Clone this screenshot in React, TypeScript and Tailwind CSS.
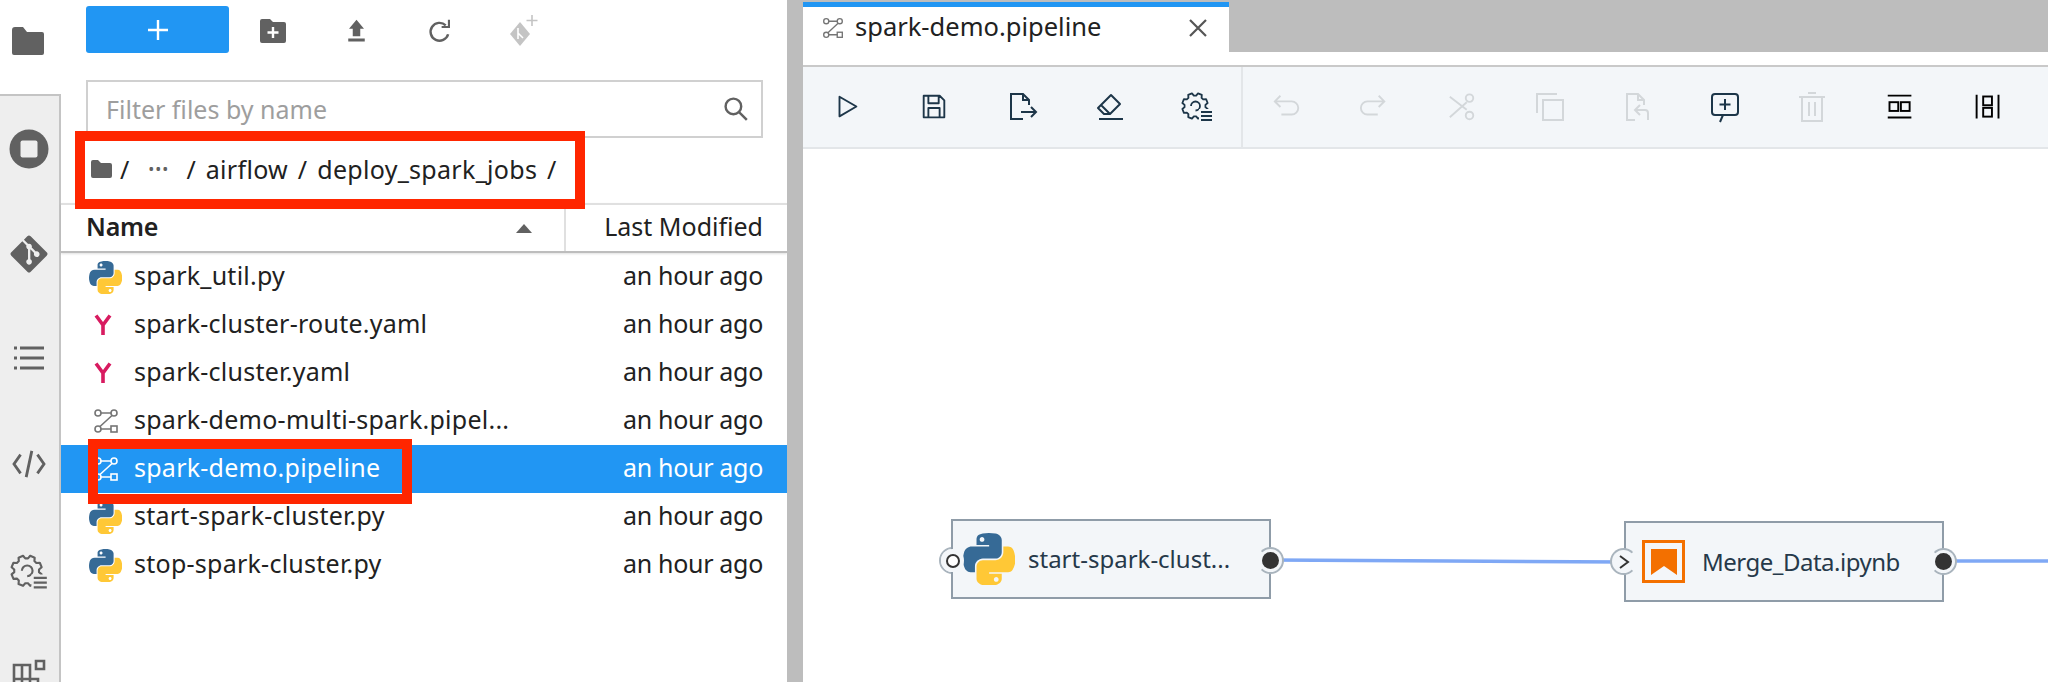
import React from "react";
import { FaGitAlt } from "react-icons/fa";

const FONT = "font-['Noto_Sans','Open_Sans',sans-serif]";

function I({ s = 32, c, children, vb = "0 0 32 32", w = 2 }: { s?: number; c?: string; children: React.ReactNode; vb?: string; w?: number }) {
  return (
    <svg width={s} height={s} viewBox={vb} fill="none" stroke="currentColor" strokeWidth={w} className={c}>
      {children}
    </svg>
  );
}

function PythonLogo({ s }: { s: number }) {
  return (
    <svg width={s} height={s} viewBox="0 0 110.4 110">
      <path fill="#366A96" d="M54.919 0.001c-4.584.022-8.961.413-12.813 1.095C30.76 3.099 28.7 7.295 28.7 15.032V25.25h26.813v3.406H18.638c-7.793 0-14.616 4.684-16.75 13.594-2.462 10.213-2.571 16.586 0 27.25 1.905 7.938 6.457 13.594 14.25 13.594h9.22v-12.25c0-8.85 7.657-16.656 16.75-16.656h26.78c7.454 0 13.406-6.138 13.406-13.625v-25.531c0-7.266-6.13-12.725-13.406-13.937C64.282.328 59.502-.02 54.918.001zm-14.5 8.219c2.77 0 5.031 2.299 5.031 5.125 0 2.816-2.262 5.094-5.031 5.094-2.78 0-5.031-2.278-5.031-5.094 0-2.826 2.252-5.125 5.031-5.125z" />
      <path fill="#FFC836" d="M85.638 28.657v11.906c0 9.231-7.826 17-16.75 17h-26.781c-7.336 0-13.406 6.278-13.406 13.625v25.531c0 7.266 6.319 11.54 13.406 13.625 8.488 2.496 16.627 2.947 26.781 0 6.75-1.954 13.406-5.888 13.406-13.625V86.5H55.513v-3.405H95.7c7.793 0 10.696-5.436 13.406-13.594 2.8-8.399 2.68-16.476 0-27.25-1.926-7.757-5.604-13.594-13.406-13.594zm-15.063 64.657c2.78 0 5.031 2.278 5.031 5.094 0 2.826-2.252 5.125-5.031 5.125-2.77 0-5.031-2.299-5.031-5.125 0-2.816 2.262-5.094 5.031-5.094z" />
    </svg>
  );
}

function PipelineIcon({ s = 26, c = "text-[#757575]" }: { s?: number; c?: string }) {
  return (
    <I s={s} c={c} vb="0 0 26 26" w={1.6}>
      <circle cx="5" cy="5" r="3" />
      <circle cx="21" cy="5" r="3" />
      <circle cx="5" cy="21" r="3" />
      <rect x="18" y="18" width="6" height="6" />
      <path d="M8 5h10M19 7.500 7 18.500M8 21h10" />
    </I>
  );
}

function YamlIcon() {
  return (
    <svg width="18" height="22" viewBox="0 0 18 22" fill="none" stroke="#D81B60" strokeWidth="3.6">
      <path d="M2 1.500 9 11l7-9.500M9 11v10" />
    </svg>
  );
}

const gearPoints = (() => {
  const pts: string[] = [];
  const n = 8;
  for (let i = 0; i < n; i++) {
    const a = (i / n) * Math.PI * 2 + Math.PI / 8;
    const st = (Math.PI * 2) / n;
    [[-0.36, 10.5], [-0.2, 13], [0.2, 13], [0.36, 10.5]].forEach(([o, r]) => {
      const t = a + (o as number) * st;
      pts.push(`${(14 + (r as number) * Math.cos(t)).toFixed(2)},${(15 + (r as number) * Math.sin(t)).toFixed(2)}`);
    });
  }
  return pts.join(" ");
})();

function GearList({ s = 36, id }: { s?: number; id: string }) {
  return (
    <I s={s} vb="0 0 32 32" w={1.8}>
      <defs>
        <clipPath id={id}>
          <path d="M0 0H32V18H18V32H0Z" />
        </clipPath>
      </defs>
      <g clipPath={`url(#${id})`}>
        <polygon points={gearPoints} strokeLinejoin="round" />
        <path d="M10 15a4.500 4.500 0 1 1 4.500 4.500" />
      </g>
      <path d="M20 21h11M20 25h11M20 29h11" />
    </I>
  );
}

const toolbar1 = [
  <I key="a" s={30}><path d="M8 5 26 15.500 8 26Z" strokeLinejoin="round" /></I>,
  <I key="b" s={30}><path d="M5 4h17l5 5v18H5Z M10 4v8h11V4M10 27V17h12v10" strokeLinejoin="round" /></I>,
  <I key="c" s={32}><path d="M17 28H5V3h12l6 6v5M17 3v6h6M15 21h15M25 16l5 5-5 5" /></I>,
  <I key="d" s={32}><path d="M5 28h24M10 23 4 17 17 4l9 9-10 10Zm-3-9 9 9" strokeLinejoin="round" /></I>,
  <GearList key="e" s={32} id="g-tool" />,
];
const off = "text-[#d3d7da]";
const toolbar2 = [
  <I key="a" s={30} c={off}><path d="M9 4 3 10l6 6M3 10h18a7 7 0 0 1 0 14H10" /></I>,
  <I key="b" s={30} c={off}><path d="m21 4 6 6-6 6M27 10H9a7 7 0 0 0 0 14h11" /></I>,
  <I key="c" s={30} c={off}><circle cx="24" cy="6.500" r="4" /><circle cx="24" cy="25" r="4" /><path d="M3 5l18 14M3 27l18-16" /></I>,
  <I key="d" s={32} c={off}><path d="M3 22V3h20M9 9h20v20H9Z" /></I>,
  <I key="e" s={32} c={off}><path d="M14 29H6V3h11l6 6v5M17 3v6h6M27 29v-7a3 3 0 0 0-3-3H14M19 14l-5 5 5 5" /></I>,
];
const toolbar3 = [
  <I key="a" s={32} c="text-[#1d3649]"><rect x="3" y="3" width="26" height="21" rx="3" /><path d="M16 8v11M10.500 13.500h11M14 24l-3 7" /></I>,
  <I key="b" s={32} c={off}><path d="M3 6h26M12 2h8M6 6v24h20V6M13 11v14M19 11v14" /></I>,
  <I key="c" s={28} c="text-black" w={2.2}><path d="M2 3h27M2 28h27" /><rect x="4" y="10.500" width="10" height="10" /><rect x="17" y="10.500" width="10" height="10" /></I>,
  <I key="d" s={28} c="text-black" w={2.2}><path d="M3 2v27M28 2v27" /><rect x="10.500" y="4" width="10" height="10" /><rect x="10.500" y="17" width="10" height="10" /></I>,
];

const files = [
  { n: "spark_util.py", k: "py" },
  { n: "spark-cluster-route.yaml", k: "y" },
  { n: "spark-cluster.yaml", k: "y" },
  { n: "spark-demo-multi-spark.pipel...", k: "p" },
  { n: "spark-demo.pipeline", k: "p", sel: true },
  { n: "start-spark-cluster.py", k: "py" },
  { n: "stop-spark-cluster.py", k: "py" },
];

function Sidebar() {
  return (
    <div className="w-[61px] shrink-0 flex flex-col text-[#616161]">
      <div className="h-[94px] shrink-0 flex items-center justify-center pb-[12px] pr-[6px]">
        <svg width="34" height="30" viewBox="0 0 34 30" fill="currentColor"><path d="M1 4a3 3 0 0 1 3-3h8l4 5h15a2 2 0 0 1 2 2v19a2 2 0 0 1-2 2H3a2 2 0 0 1-2-2Z" /></svg>
      </div>
      <div className="flex-1 bg-[#eeeeee] border-t-2 border-r-2 border-[#c4c4c4] flex flex-col overflow-hidden pr-[2px]">
        <div className="h-[105px] shrink-0 flex items-center justify-center">
          <svg width="40" height="40" viewBox="0 0 40 40"><circle cx="20" cy="20" r="19.500" fill="currentColor" /><rect x="11.500" y="11.500" width="17" height="17" rx="2" fill="#eeeeee" /></svg>
        </div>
        <div className="h-[106px] shrink-0 flex items-center justify-center"><FaGitAlt size={42} /></div>
        <div className="h-[106px] shrink-0 flex items-center justify-center pb-[5px]">
          <svg width="32" height="26" viewBox="0 0 32 26" fill="none" stroke="currentColor" strokeWidth="3"><path d="M7 3h24M7 13h24M7 23h24" /><path d="M1 3h3M1 13h3M1 23h3" /></svg>
        </div>
        <div className="h-[106px] shrink-0 flex items-center justify-center pb-[5px]">
          <svg width="34" height="30" viewBox="0 0 36 32" fill="none" stroke="currentColor" strokeWidth="3"><path d="M9 6 2 16l7 10M27 6l7 10-7 10M21 2l-6 28" /></svg>
        </div>
        <div className="h-[106px] shrink-0 flex items-center justify-center"><GearList s={38} id="g-side" /></div>
        <div className="h-[106px] shrink-0 flex items-center justify-center pb-[3px]">
          <svg width="34" height="36" viewBox="0 0 34 36" fill="none" stroke="currentColor" strokeWidth="2.600"><path d="M2 6h16v28H2ZM2 20h24v14H2M10 20v14M10 20V6M24 2h8v8h-8Z" /></svg>
        </div>
      </div>
    </div>
  );
}

function FileRow({ n, k, sel }: { n: string; k: string; sel?: boolean }) {
  return (
    <div className={`h-[48px] flex items-center pl-[28px] pr-[24px] ${sel ? "bg-[#2196f3] text-white" : "text-[#212121]"}`}>
      <div className="w-[45px] shrink-0 flex items-center">
        {k === "py" && <PythonLogo s={33} />}
        {k === "y" && <span className="ml-[5px] flex"><YamlIcon /></span>}
        {k === "p" && <span className="ml-[4px] flex"><PipelineIcon c={sel ? "text-white" : "text-[#757575]"} /></span>}
      </div>
      <span className="flex-1 whitespace-nowrap tracking-[0.25px] pb-[3px]">{n}</span>
      <span className="tracking-[-0.3px] pb-[3px]">an hour ago</span>
    </div>
  );
}

function FilePanel() {
  return (
    <div className="w-[726px] shrink-0 flex flex-col text-[25px] leading-none">
      <div className="flex items-center pl-[25px] pt-[6px] h-[53px] text-[#616161]">
        <div className="w-[143px] h-[47px] bg-[#2196f3] rounded-[3px] flex items-center justify-center">
          <svg width="22" height="22" viewBox="0 0 22 22" stroke="white" strokeWidth="2.400"><path d="M11 1v20M1 11h20" /></svg>
        </div>
        <div className="w-[85px] ml-[1px] flex justify-center mt-[3px]">
          <svg width="28" height="26" viewBox="0 0 28 26" fill="currentColor"><path d="M1 3a2 2 0 0 1 2-2h8l3 3h11a2 2 0 0 1 2 2v17a2 2 0 0 1-2 2H3a2 2 0 0 1-2-2Z" /><path d="M14 9v11M8.500 14.500h11" stroke="#fff" strokeWidth="2.400" /></svg>
        </div>
        <div className="w-[83px] flex justify-center mt-[3px]">
          <svg width="19" height="24" viewBox="0 0 24 32" fill="currentColor"><path d="M12 1 22 13h-5v10H7V13H2Z" /><rect x="1" y="26" width="22" height="4" /></svg>
        </div>
        <div className="w-[84px] flex justify-center mt-[3px]">
          <svg width="24" height="26" viewBox="0 0 28 32" fill="none" stroke="currentColor" strokeWidth="3"><path d="M24 20a11 11 0 1 1-3-11" /><path d="M25 2v9h-9" strokeWidth="2.600" /></svg>
        </div>
        <div className="w-[82px] flex justify-center text-[#c4c4c4] mt-[3px]">
          <svg width="30" height="34" viewBox="0 0 30 34" fill="currentColor"><path d="M12 8 22 20l-10 12L2 20Z" /><path d="M10 14v11M10 19l5 5" stroke="#fff" strokeWidth="1.600" /><path d="M24 1v11M18.500 6.500h11" stroke="currentColor" strokeWidth="1.600" /></svg>
        </div>
      </div>
      <div className="ml-[25px] mt-[27px] w-[677px] h-[58px] shrink-0 border-2 border-[#d0d0d0] flex items-center pl-[18px] pr-[12px] justify-between">
        <span className="text-[#9e9e9e]">Filter files by name</span>
        <svg width="26" height="26" viewBox="0 0 30 30" fill="none" stroke="#616161" strokeWidth="2.800"><circle cx="12" cy="12" r="9" /><path d="m18.500 18.500 9 9" /></svg>
      </div>
      <div className="h-[65px] shrink-0 pl-[30px] flex items-center text-[#212121] pb-[3px]">
        <svg width="21" height="18" viewBox="0 0 21 18" fill="#616161"><path d="M0 2a2 2 0 0 1 2-2h5l3 3h9a2 2 0 0 1 2 2v11a2 2 0 0 1-2 2H2a2 2 0 0 1-2-2Z" /></svg>
        <span className="ml-[8px]">/</span>
        <span className="ml-[19px] text-[16px] tracking-[1px] text-[#616161]">•••</span>
        <span className="ml-[17px] whitespace-pre tracking-[0.3px] [word-spacing:3px]">/ airflow / deploy_spark_jobs /</span>
      </div>
      <div className="h-[50px] shrink-0 flex items-center border-t-2 border-b-2 border-t-[#e0e0e0] border-b-[#bdbdbd] shadow-[0_1px_2px_rgba(0,0,0,0.12)] text-[#212121]">
        <div className="w-[505px] h-full flex items-center justify-between pl-[25px] pr-[32px] border-r-2 border-[#e0e0e0]">
          <span className="font-semibold pb-[3px] tracking-[-0.2px]">Name</span>
          <svg width="16" height="9" viewBox="0 0 18 10" fill="#616161"><path d="M9 0l9 10H0Z" /></svg>
        </div>
        <div className="flex-1 text-right pr-[24px] pb-[3px]">Last Modified</div>
      </div>
      <div className="flex flex-col">
        {files.map((f) => <FileRow key={f.n} {...f} />)}
      </div>
    </div>
  );
}

function Canvas() {
  return (
    <div className="relative flex-1 bg-white">
      <svg className="absolute left-0 top-0" width="1245" height="533" fill="none" stroke="#7fa8f5" strokeWidth="3.500">
        <path d="M468 411 C620 411 670 413 821 413" />
        <path d="M1141 412H1245" />
      </svg>
      <div className="absolute left-[136px] top-[398px] w-[27px] h-[27px] rounded-full bg-[#f3f6f9] border-2 border-[#a9b4bd]" />
      <div className="absolute left-[148px] top-[370px] w-[320px] h-[80px] bg-[#f3f6f9] border-2 border-[#8f9ca8] flex items-center text-[#26394a] text-[24px] leading-none">
        <span className="ml-[10px] flex relative"><PythonLogo s={52} /></span>
        <span className="ml-[13px] whitespace-nowrap">start-spark-clust...</span>
      </div>
      <div className="absolute left-[138px] top-[400px] w-[23px] h-[23px] rounded-full bg-[#f3f6f9] flex items-center justify-center">
        <div className="w-[14px] h-[14px] rounded-full border-[2.500px] border-[#333333] bg-white" />
      </div>
      <div className="absolute left-[454px] top-[398px] w-[27px] h-[27px] rounded-full bg-[#f3f6f9] border-2 border-[#a9b4bd] border-l-transparent flex items-center justify-center">
        <div className="w-[17px] h-[17px] rounded-full bg-[#333333]" />
      </div>
      <div className="absolute left-[821px] top-[372px] w-[320px] h-[81px] bg-[#f3f6f9] border-2 border-[#8f9ca8] flex items-center text-[#26394a] text-[24px] leading-none">
        <div className="ml-[16px] w-[43px] h-[43px] border-[3px] border-[#f37000] flex items-center justify-center">
          <svg width="26" height="26" viewBox="0 0 26 26" fill="#f37000"><path d="M0 0h26v26L13 17 0 26Z" /></svg>
        </div>
        <span className="ml-[17px] whitespace-nowrap tracking-[-0.5px]">Merge_Data.ipynb</span>
      </div>
      <div className="absolute left-[807px] top-[399px] w-[27px] h-[27px] rounded-full bg-[#f3f6f9] border-2 border-[#a9b4bd] border-r-transparent flex items-center justify-center">
        <svg width="12" height="14" viewBox="0 0 12 14" fill="none" stroke="#333" strokeWidth="2"><path d="m2 1 8 6-8 6" /></svg>
      </div>
      <div className="absolute left-[1127px] top-[399px] w-[27px] h-[27px] rounded-full bg-[#f3f6f9] border-2 border-[#a9b4bd] border-l-transparent flex items-center justify-center">
        <div className="w-[17px] h-[17px] rounded-full bg-[#333333]" />
      </div>
    </div>
  );
}

function Main() {
  return (
    <div className="flex-1 min-w-0 flex flex-col">
      <div className="h-[52px] shrink-0 bg-[#bdbdbd] flex">
        <div className="w-[426px] bg-white mt-[2px] border-t-[5px] border-[#2196f3] flex items-center pl-[19px] pr-[21px] pb-[3px]">
          <PipelineIcon s={22} />
          <span className="ml-[11px] flex-1 text-[25.500px] text-[#212121] leading-none pb-[3px]">spark-demo.pipeline</span>
          <svg width="20" height="20" viewBox="0 0 20 20" stroke="#555" strokeWidth="2.200"><path d="m2 2 16 16M18 2 2 18" /></svg>
        </div>
      </div>
      <div className="h-[13px] shrink-0 bg-white" />
      <div className="h-[84px] shrink-0 bg-[#f3f6f9] border-t-2 border-b-2 border-t-[#c9c9c9] border-b-[#e3e6e9] flex text-[#1d3649]">
        <div className="flex border-r-2 border-[#e3e6e9]">
          {toolbar1.map((t, i) => <div key={i} className="w-[87.600px] flex items-center justify-center">{t}</div>)}
        </div>
        <div className="flex">
          {[...toolbar2, ...toolbar3].map((t, i) => <div key={i} className="w-[87.600px] flex items-center justify-center">{t}</div>)}
        </div>
      </div>
      <Canvas />
    </div>
  );
}

export default function App() {
  return (
    <div className={`relative w-[2048px] h-[682px] overflow-hidden bg-white flex ${FONT}`}>
      <Sidebar />
      <FilePanel />
      <div className="w-[16px] shrink-0 bg-[#bdbdbd]" />
      <Main />
      <div className="absolute left-[75px] top-[131px] w-[510px] h-[78px] border-[10px] border-[#ff2600]" />
      <div className="absolute left-[88px] top-[439px] w-[324px] h-[65px] border-[10px] border-[#ff2600]" />
    </div>
  );
}
